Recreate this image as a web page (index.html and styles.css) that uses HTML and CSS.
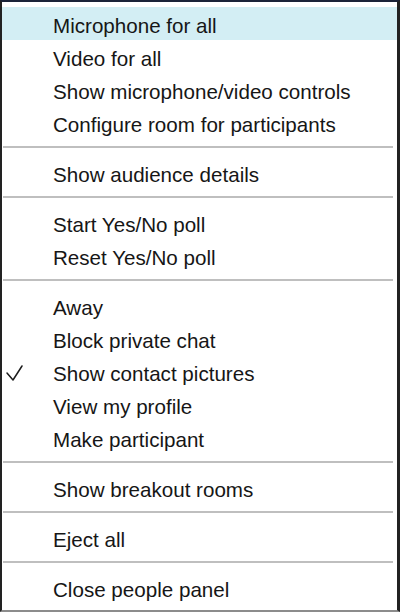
FILE: index.html
```html
<!DOCTYPE html>
<html>
<head>
<meta charset="utf-8">
<link rel="stylesheet" href="styles.css">
</head>
<body>
<div class="menu">
  <div class="item active"><span class="mark"></span><span class="label">Microphone for all</span></div>
  <div class="item"><span class="mark"></span><span class="label">Video for all</span></div>
  <div class="item"><span class="mark"></span><span class="label">Show microphone/video controls</span></div>
  <div class="item"><span class="mark"></span><span class="label">Configure room for participants</span></div>
  <div class="sep"></div>
  <div class="item"><span class="mark"></span><span class="label">Show audience details</span></div>
  <div class="sep"></div>
  <div class="item"><span class="mark"></span><span class="label">Start Yes/No poll</span></div>
  <div class="item"><span class="mark"></span><span class="label">Reset Yes/No poll</span></div>
  <div class="sep"></div>
  <div class="item"><span class="mark"></span><span class="label">Away</span></div>
  <div class="item"><span class="mark"></span><span class="label">Block private chat</span></div>
  <div class="item"><span class="mark"><svg width="20" height="20" viewBox="0 0 20 20"><polyline points="2,10 8,17 17,3" fill="none" stroke="#1c1c1c" stroke-width="1.5" stroke-linecap="round" stroke-linejoin="round"/></svg></span><span class="label">Show contact pictures</span></div>
  <div class="item"><span class="mark"></span><span class="label">View my profile</span></div>
  <div class="item"><span class="mark"></span><span class="label">Make participant</span></div>
  <div class="sep"></div>
  <div class="item"><span class="mark"></span><span class="label">Show breakout rooms</span></div>
  <div class="sep"></div>
  <div class="item"><span class="mark"></span><span class="label">Eject all</span></div>
  <div class="sep"></div>
  <div class="item"><span class="mark"></span><span class="label">Close people panel</span></div>
</div>
</body>
</html>
```

FILE: styles.css
```css
html, body {
  margin: 0;
  padding: 0;
  background: #ffffff;
}

.menu {
  width: 400px;
  height: 612px;
  box-sizing: border-box;
  border-top: 2px solid #1b2338;
  border-left: 2px solid #222222;
  border-right: 3px solid #222222;
  border-bottom: 2px solid #8c8c8c;
  padding-top: 5px;
  padding-bottom: 6px;
  background: #ffffff;
  font-family: "Liberation Sans", Arial, sans-serif;
  font-size: 20.6px;
  color: #161616;
  display: flex;
  flex-direction: column;
}

.item {
  height: 33px;
  box-sizing: border-box;
  padding-top: 4px;
  display: flex;
  align-items: center;
  flex: none;
}

.item.active {
  background: #d3eef4;
}

.mark {
  width: 51px;
  flex: none;
  display: flex;
  align-items: center;
  padding-left: 3px;
  box-sizing: border-box;
}

.mark svg {
  display: block;
  margin-top: -2px;
}

.label {
  white-space: nowrap;
}

.sep {
  flex: none;
  height: 2px;
  background: #bfbfbf;
  margin: 7px 4px 8px 1px;
}
```
